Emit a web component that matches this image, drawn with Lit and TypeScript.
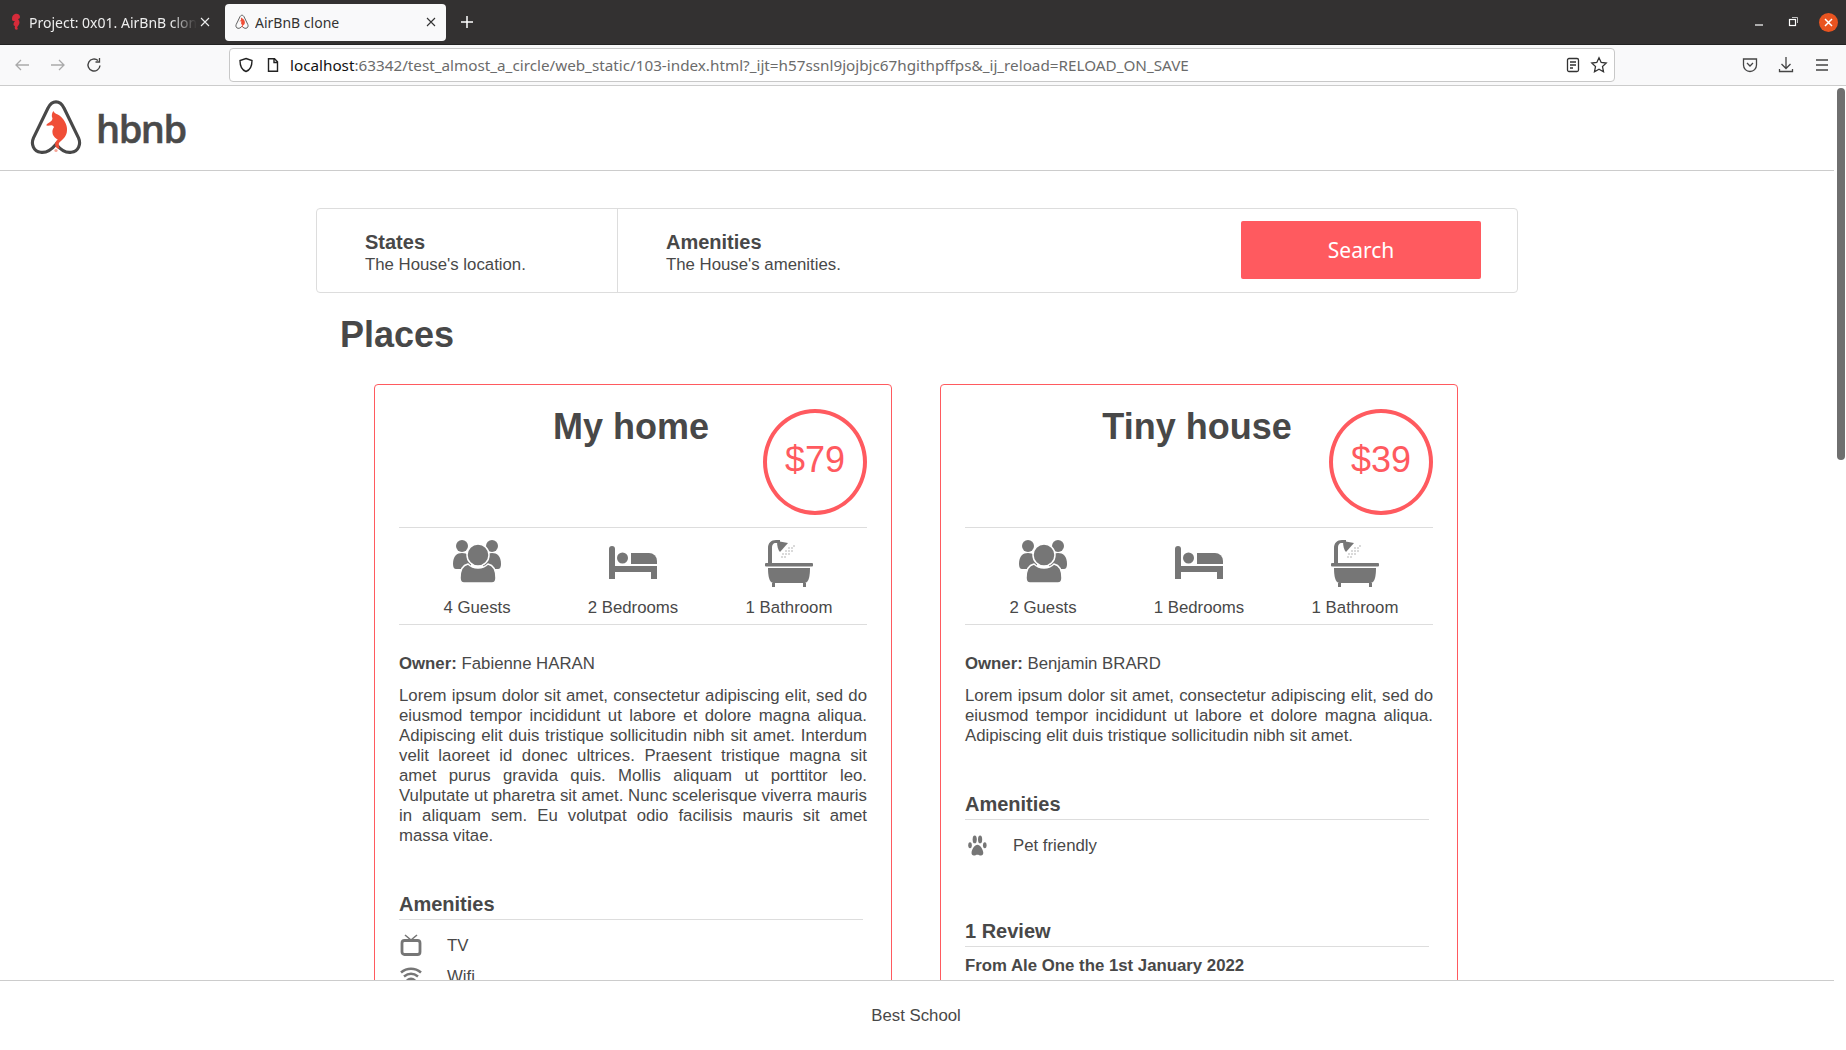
import { LitElement, css, html, svg } from 'lit'
import { customElement } from 'lit/decorators.js'

const guestsIcon = svg`
  <circle cx="9" cy="7" r="6"/><circle cx="39" cy="7" r="6"/>
  <path d="M0 25c0-8 4-11 9-11s9 3 9 11v5H3c-2 0-3-2-3-5z"/>
  <path d="M48 25c0-8-4-11-9-11s-9 3-9 11v5h15c2 0 3-2 3-5z"/>
  <circle cx="25" cy="16" r="11" stroke="#fff" stroke-width="1.5"/>
  <path d="M7 39c0-9 3-13 8-14 3 3 7 4 10 4s7-1 10-4c5 1 8 5 8 14 0 3-2 5-4 5H11c-2 0-4-2-4-5z" stroke="#fff" stroke-width="1.5"/>`

const bedIcon = svg`
  <path d="M0 10a3 3 0 0 1 6 0v30H0z"/>
  <circle cx="13.5" cy="19" r="5.5"/>
  <path d="M22 14h18a8 8 0 0 1 8 8v3H22z"/>
  <path d="M6 27h42v13h-6v-7H6z"/>`

const bathIcon = svg`
  <path d="M3 24V9c0-5 3-8 8-8h4v3h-4c-3 0-4 2-4 5v15z"/>
  <path d="M12 2l11 2-8 9c-2-2-3-6-3-11z"/>
  <rect x="0" y="24" width="48" height="3.5" rx="1"/>
  <path d="M3 29h42c0 7-1 12-3 14l-2 1H8l-2-1c-2-2-3-7-3-14z"/>
  <path d="M7 44h3v4H7zM38 44h3v4h-3z"/>
  <g fill="#aaa">
    <circle cx="18" cy="15" r=".8"/><circle cx="21" cy="12" r=".8"/><circle cx="24" cy="9" r=".8"/>
    <circle cx="21" cy="15" r=".8"/><circle cx="24" cy="12" r=".8"/><circle cx="27" cy="9" r=".8"/>
    <circle cx="17" cy="18" r=".8"/><circle cx="20" cy="18" r=".8"/><circle cx="24" cy="15" r=".8"/>
    <circle cx="27" cy="12" r=".8"/><circle cx="29" cy="7" r=".8"/>
  </g>`

const tvIcon = svg`
  <path d="M6 1l6 5M18 1l-6 5" fill="none" stroke="#767676" stroke-width="1.6"/>
  <rect x="3" y="6.500" width="18" height="14" rx="2.500" fill="none" stroke="#767676" stroke-width="2.800"/>`

const wifiIcon = svg`
  <g fill="none" stroke="#767676" stroke-width="2.600">
    <path d="M2 7.500c6-5 14-5 20 0"/><path d="M5 11.500c4.500-3.500 9.500-3.500 14 0"/><path d="M8 15.500c2.500-2 5.500-2 8 0"/>
  </g>`

const pawIcon = svg`
  <g transform="translate(2.500 0) scale(.9 1.08)">
    <ellipse cx="8" cy="5" rx="2.300" ry="3.600"/><ellipse cx="14" cy="5" rx="2.300" ry="3.600"/>
    <ellipse cx="2.800" cy="10.500" rx="2" ry="2.800"/><ellipse cx="19.200" cy="10.500" rx="2" ry="2.800"/>
    <path d="M11 10c3 0 6 4 6.500 7 .3 2-1 3-2.500 3-1.500 0-2.500-.7-4-.7s-2.500.7-4 .7c-1.500 0-2.800-1-2.500-3C5 14 8 10 11 10z"/>
  </g>`

const seahorse = svg`
  <path d="M27 14c1 2 3 3 5 4 5 3 9 8 10 14 1 6-1 11-5 14-2 2-4 3-4 5s1 4 1 5c-3 0-5-2-5-5 0-2 1-4 3-5-3-2-6-4-6-9 0-2 1-4 2-5-1-1-2-2-3-2-2 0-4 1-6 0 1-2 4-3 6-5 1-1 1-2 1-3-1-2-1-5 1-8z" fill="#f04e37"/>
  <circle cx="30" cy="58" r="1.800" fill="#f6a598"/>`

const logoOutline = 'M30 4c-4 0-7 3-9 7L5 44c-3 7 0 15 8 16 6 1 12-3 17-9 5 6 11 10 17 9 8-1 11-9 8-16L39 11c-2-4-5-7-9-7z'

@customElement('browser-bar')
export class BrowserBar extends LitElement {
  static styles = css`
    :host {
      display: block;
      font-family: 'Noto Sans', 'Open Sans', sans-serif;
    }

    .tabs {
      height: 44px;
      background: #333131;
      display: flex;
      align-items: center;
      color: #fff;
      font-size: 14px;
    }

    .tab {
      height: 37px;
      display: flex;
      align-items: center;
      box-sizing: border-box;
      flex: none;
    }

    .tab.first {
      width: 225px;
      padding-left: 12px;
      color: #eee;
    }

    .tab.active {
      width: 221px;
      padding-left: 10px;
      background: #f9f9fa;
      color: #333;
      border-radius: 4px;
    }

    .label {
      flex: 1;
      overflow: hidden;
      white-space: nowrap;
      margin-left: 6px;
      padding-top: 1px;
    }

    .first .label {
      margin-left: 8px;
      -webkit-mask-image: linear-gradient(to left, transparent 0, #000 26px);
      mask-image: linear-gradient(to left, transparent 0, #000 26px);
    }

    .tab svg.x {
      margin: 0 9px 0 2px;
      flex: none;
    }

    .first svg.x {
      margin-right: 14px;
    }

    .plus {
      margin-left: 14px;
    }

    .winctl {
      margin-left: auto;
      display: flex;
      align-items: center;
      gap: 20px;
      padding-right: 8px;
    }

    .close {
      width: 19px;
      height: 19px;
      margin-left: -1px;
      border-radius: 50%;
      background: #e95420;
      display: flex;
      align-items: center;
      justify-content: center;
    }

    .toolbar {
      height: 42px;
      box-sizing: border-box;
      background: #f9f9fa;
      border-top: 1px solid #222;
      border-bottom: 1px solid #ccc;
      display: flex;
      align-items: center;
      padding-left: 14px;
    }

    .nav {
      display: flex;
      align-items: center;
      gap: 20px;
      width: 215px;
      flex: none;
    }

    .url {
      width: 1386px;
      height: 34px;
      box-sizing: border-box;
      flex: none;
      background: #fff;
      border: 1px solid #c8c8c8;
      border-radius: 4px;
      display: flex;
      align-items: center;
      padding: 0 6px 0 8px;
      font-size: 15.25px;
      color: #6b6b6b;
      white-space: nowrap;
    }

    .url b {
      font-weight: 400;
      color: #111;
    }

    .url .text {
      flex: 1;
      margin-left: 9px;
    }

    .url svg + svg {
      margin-left: 11px;
    }

    .url .right {
      display: flex;
      align-items: center;
    }

    .url .right svg + svg {
      margin-left: 9px;
    }

    .tools {
      display: flex;
      align-items: center;
      gap: 16px;
      margin-left: 125px;
    }
  `

  render() {
    const x = html`<svg class="x" width="12" height="12" viewBox="0 0 12 12" stroke="currentColor" stroke-width="1.1"><path d="M2 2l8 8M10 2l-8 8"/></svg>`
    return html`
      <div class="tabs">
        <div class="tab first">
          <svg width="9" height="18" viewBox="0 0 9 18"><path d="M3 1c3-1 5 1 5 3 0 1-1 2-2 2 2 2 2 5 0 7-1 1-1 2 0 3-2 2-4 0-3-3-2 0-2-3 0-5-2 0-3 0-3-2 0-3 1-4 3-5z" fill="#d62b3a"/></svg>
          <span class="label">Project: 0x01. AirBnB clone</span>
          ${x}
        </div>
        <div class="tab active">
          <svg width="14" height="16" viewBox="0 0 60 66"><path d=${logoOutline} fill="none" stroke="#555" stroke-width="4"/>${seahorse}</svg>
          <span class="label">AirBnB clone</span>
          ${x}
        </div>
        <svg class="plus" width="14" height="14" viewBox="0 0 14 14" stroke="#fff" stroke-width="1.5"><path d="M7 1v12M1 7h12"/></svg>
        <div class="winctl">
          <svg width="14" height="14" viewBox="0 0 14 14" stroke="#fff" stroke-width="1.2"><path d="M3 10h8"/></svg>
          <svg width="14" height="14" viewBox="0 0 14 14" fill="none" stroke="#fff"><rect x="3.500" y="4.500" width="6" height="6" stroke-width="1.2"/><path d="M6 2.500h5.500V8" stroke-width=".7"/></svg>
          <div class="close"><svg width="11" height="11" viewBox="0 0 11 11" stroke="#fff" stroke-width="1.5"><path d="M2 2l7 7M9 2l-7 7"/></svg></div>
        </div>
      </div>
      <div class="toolbar">
        <div class="nav">
          <svg width="16" height="16" viewBox="0 0 16 16" fill="none" stroke="#aaa" stroke-width="1.3"><path d="M15 8H2M7 3L2 8l5 5"/></svg>
          <svg width="16" height="16" viewBox="0 0 16 16" fill="none" stroke="#aaa" stroke-width="1.3"><path d="M1 8h13M9 3l5 5-5 5"/></svg>
          <svg width="16" height="16" viewBox="0 0 16 16" fill="none" stroke="#444" stroke-width="1.4"><path d="M14 8.500A6 6 0 1 1 12 3.500"/><path d="M13.500 1v4h-4" stroke-width="1.300"/></svg>
        </div>
        <div class="url">
          <svg width="16" height="16" viewBox="0 0 16 16" fill="none" stroke="#222" stroke-width="1.4"><path d="M8 1.500l6 2c0 6-1.500 9.500-6 11-4.500-1.500-6-5-6-11z"/></svg>
          <svg width="16" height="16" viewBox="0 0 16 16" fill="none" stroke="#222" stroke-width="1.4"><path d="M3.500 1.700h6l3 3v9.600h-9zM9 2v3.500h3.500"/></svg>
          <span class="text"><b>localhost</b>:63342/test_almost_a_circle/web_static/103-index.html?_ijt=h57ssnl9jojbjc67hgithpffps&_ij_reload=RELOAD_ON_SAVE</span>
          <span class="right">
            <svg width="16" height="16" viewBox="0 0 16 16" fill="none" stroke="#333" stroke-width="1.300"><rect x="2.500" y="1.500" width="11" height="13" rx="1.500"/><path d="M5 5h6M5 8h6M5 11h3"/></svg>
            <svg width="18" height="18" viewBox="0 0 18 18" fill="none" stroke="#333" stroke-width="1.300"><path d="M9 1.800l2.200 4.700 5 .6-3.700 3.500 1 5.100L9 13.200l-4.500 2.500 1-5.100L1.800 7.100l5-.6z"/></svg>
          </span>
        </div>
        <div class="tools">
          <svg width="20" height="20" viewBox="0 0 20 20" fill="none" stroke="#444" stroke-width="1.300"><path d="M3.500 4h13v6a6.500 6.500 0 0 1-13 0zM7 8l3 3 3-3"/></svg>
          <svg width="20" height="20" viewBox="0 0 20 20" fill="none" stroke="#444" stroke-width="1.300"><path d="M10 2v11M5.500 9l4.500 4.500L14.500 9M3.500 14v2.500h13V14"/></svg>
          <svg width="20" height="20" viewBox="0 0 20 20" fill="none" stroke="#444" stroke-width="1.300"><path d="M4 5h12M4 10h12M4 15h12"/></svg>
        </div>
      </div>
    `
  }
}

@customElement('place-card')
export class PlaceCard extends LitElement {
  static properties = {
    place: { attribute: false },
  }

  declare place: any

  static styles = css`
    :host {
      display: block;
      flex: none;
      width: 518px;
    }

    .card {
      position: relative;
      box-sizing: border-box;
      border: 1px solid #ff5a5f;
      border-radius: 4px;
      padding: 0 24px 24px;
    }

    h2 {
      margin: 0;
      height: 142px;
      box-sizing: border-box;
      padding: 21px 4px 0 0;
      text-align: center;
      font-size: 36px;
      line-height: 41px;
      font-weight: 700;
    }

    .price {
      position: absolute;
      top: 24px;
      right: 24px;
      width: 104px;
      height: 106px;
      box-sizing: border-box;
      border: 4px solid #ff5a5f;
      border-radius: 50%;
      color: #ff5a5f;
      font-size: 36px;
      display: flex;
      align-items: center;
      justify-content: center;
      padding-bottom: 4px;
    }

    .info {
      display: grid;
      grid-template-columns: repeat(3, 1fr);
      height: 98px;
      box-sizing: border-box;
      border-top: 1px solid #ddd;
      border-bottom: 1px solid #ddd;
      padding-top: 11px;
      text-align: center;
    }

    .info svg {
      display: block;
      margin: 0 auto 11px;
      fill: #767676;
    }

    .owner {
      margin: 29px 0 12px;
    }

    .desc {
      margin: 0;
      text-align: justify;
    }

    h3 {
      margin: 0;
      font-size: 20px;
      line-height: 23px;
      font-weight: 700;
      border-bottom: 1px solid #ddd;
      padding-bottom: 3px;
      width: 464px;
    }

    .amen {
      margin-top: 47px;
    }

    .amen-row {
      display: flex;
      align-items: center;
      height: 31px;
    }

    .amen-list {
      padding-top: 10px;
    }

    .amen-row svg {
      width: 24px;
      height: 24px;
      flex: none;
      margin-right: 24px;
      fill: #767676;
    }

    .reviews {
      margin-top: 59px;
    }

    .from {
      font-weight: 700;
      margin-top: 9px;
    }
  `

  render() {
    const p = this.place
    return html`
      <div class="card">
        <h2>${p.name}</h2>
        <div class="price">$${p.price}</div>
        <div class="info">
          <div><svg width="48" height="48" viewBox="0 0 48 48">${guestsIcon}</svg>${p.guests} Guests</div>
          <div><svg width="48" height="48" viewBox="0 0 48 48">${bedIcon}</svg>${p.bedrooms} Bedrooms</div>
          <div><svg width="48" height="48" viewBox="0 0 48 48">${bathIcon}</svg>${p.bathrooms} Bathroom</div>
        </div>
        <div class="owner"><b>Owner:</b> ${p.owner}</div>
        <p class="desc">${p.description}</p>
        <div class="amen">
          <h3>Amenities</h3>
          <div class="amen-list">
            ${p.amenities.map((a: any) => html`
              <div class="amen-row"><svg viewBox="0 0 24 24">${a.icon}</svg>${a.name}</div>
            `)}
          </div>
        </div>
        ${p.review ? html`
          <div class="reviews">
            <h3>1 Review</h3>
            <div class="from">${p.review}</div>
          </div>
        ` : ''}
      </div>
    `
  }
}

const LONG = 'Lorem ipsum dolor sit amet, consectetur adipiscing elit, sed do eiusmod tempor incididunt ut labore et dolore magna aliqua. Adipiscing elit duis tristique sollicitudin nibh sit amet. Interdum velit laoreet id donec ultrices. Praesent tristique magna sit amet purus gravida quis. Mollis aliquam ut porttitor leo. Vulputate ut pharetra sit amet. Nunc scelerisque viverra mauris in aliquam sem. Eu volutpat odio facilisis mauris sit amet massa vitae.'
const SHORT = 'Lorem ipsum dolor sit amet, consectetur adipiscing elit, sed do eiusmod tempor incididunt ut labore et dolore magna aliqua. Adipiscing elit duis tristique sollicitudin nibh sit amet.'

const PLACES = [
  {
    name: 'My home', price: 79, guests: 4, bedrooms: 2, bathrooms: 1,
    owner: 'Fabienne HARAN', description: LONG,
    amenities: [{ name: 'TV', icon: tvIcon }, { name: 'Wifi', icon: wifiIcon }],
  },
  {
    name: 'Tiny house', price: 39, guests: 2, bedrooms: 1, bathrooms: 1,
    owner: 'Benjamin BRARD', description: SHORT,
    amenities: [{ name: 'Pet friendly', icon: pawIcon }],
    review: 'From Ale One the 1st January 2022',
  },
]

@customElement('app-root')
export class AppRoot extends LitElement {
  static styles = css`
    :host {
      display: flex;
      flex-direction: column;
      height: 1050px;
      overflow: hidden;
      position: relative;
      background: #fff;
      color: #484848;
      font-family: 'Liberation Sans', Arial, sans-serif;
      font-size: 16.8px;
      line-height: 20px;
    }

    .page {
      flex: 1;
      min-height: 0;
      width: 1834px;
      display: flex;
      flex-direction: column;
    }

    header {
      height: 85px;
      box-sizing: border-box;
      border-bottom: 1px solid #ccc;
      display: flex;
      align-items: center;
      padding-left: 29px;
      flex: none;
    }

    .wordmark {
      font-family: 'Open Sans', sans-serif;
      font-weight: 600;
      font-size: 38px;
      letter-spacing: -1.5px;
      margin-left: 13px;
      color: #4a4a4a;
      -webkit-text-stroke: .5px #4a4a4a;
    }

    main {
      flex: 1;
      min-height: 0;
      overflow: hidden;
      width: 1202px;
      margin: 0 auto;
      padding-top: 37px;
    }

    .filters {
      height: 85px;
      box-sizing: border-box;
      border: 1px solid #ddd;
      border-radius: 4px;
      display: flex;
      align-items: center;
    }

    .filter {
      height: 100%;
      box-sizing: border-box;
      padding: 22px 0 0 48px;
    }

    .filter.states {
      width: 301px;
      border-right: 1px solid #ddd;
      flex: none;
    }

    .filter.amenities {
      flex: 1;
    }

    .filter h4 {
      margin: 0 0 1px;
      font-size: 20px;
      line-height: 23px;
      font-weight: 700;
    }

    button {
      width: 240px;
      height: 58px;
      flex: none;
      margin: 0 36px 2px 0;
      padding: 0;
      border: 0;
      border-radius: 2px;
      background: #ff5a5f;
      color: #fff;
      font-family: 'Noto Sans', sans-serif;
      font-size: 21px;
    }

    h1 {
      margin: 0;
      padding: 21px 0 0 24px;
      font-size: 36px;
      line-height: 41px;
      font-weight: 700;
    }

    .places {
      display: flex;
      gap: 48px;
      padding: 29px 0 0 58px;
    }

    footer {
      height: 70px;
      flex: none;
      box-sizing: border-box;
      border-top: 1px solid #ccc;
      padding-right: 2px;
      display: flex;
      align-items: center;
      justify-content: center;
      position: relative;
    }

    .scrollbar {
      position: absolute;
      top: 88px;
      right: 1px;
      width: 8px;
      height: 372px;
      border-radius: 4px;
      background: #6f6f6f;
    }
  `

  render() {
    return html`
      <browser-bar></browser-bar>
      <div class="page">
        <header>
          <svg width="54" height="62" viewBox="0 0 60 66">
            <path d=${logoOutline} fill="none" stroke="#484848" stroke-width="3.500"/>
            ${seahorse}
          </svg>
          <span class="wordmark">hbnb</span>
        </header>
        <main>
          <section class="filters">
            <div class="filter states">
              <h4>States</h4>
              <div>The House's location.</div>
            </div>
            <div class="filter amenities">
              <h4>Amenities</h4>
              <div>The House's amenities.</div>
            </div>
            <button>Search</button>
          </section>
          <h1>Places</h1>
          <section class="places">
            ${PLACES.map(p => html`<place-card .place=${p}></place-card>`)}
          </section>
        </main>
        <footer>Best School</footer>
      </div>
      <div class="scrollbar"></div>
    `
  }
}
